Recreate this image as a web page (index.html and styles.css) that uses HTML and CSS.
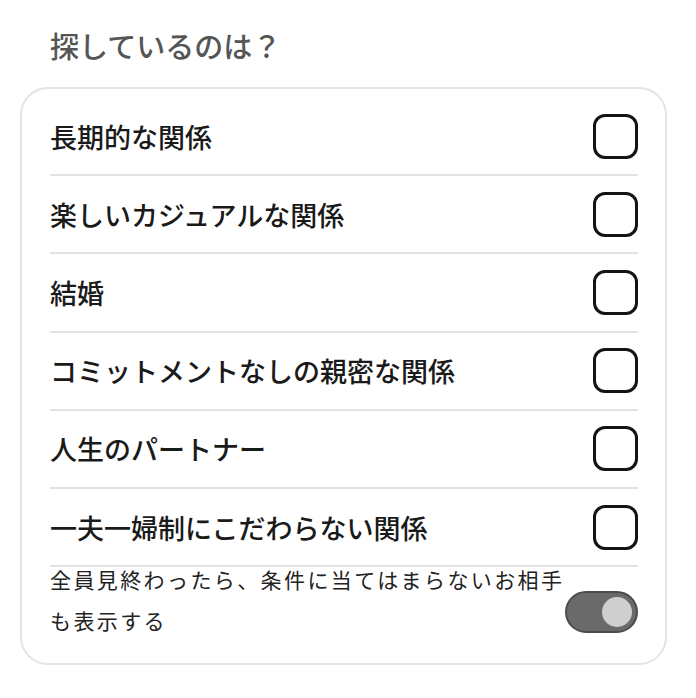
FILE: index.html
```html
<!DOCTYPE html>
<html lang="ja">
<head>
<meta charset="utf-8">
<link rel="stylesheet" href="styles.css">
</head>
<body>
<div class="page">
  <h2 class="title">探しているのは？</h2>
  <div class="card">
    <div class="row"><span class="label">長期的な関係</span><span class="check"></span></div>
    <div class="row"><span class="label">楽しいカジュアルな関係</span><span class="check"></span></div>
    <div class="row"><span class="label">結婚</span><span class="check"></span></div>
    <div class="row"><span class="label">コミットメントなしの親密な関係</span><span class="check"></span></div>
    <div class="row"><span class="label">人生のパートナー</span><span class="check"></span></div>
    <div class="row"><span class="label">一夫一婦制にこだわらない関係</span><span class="check"></span></div>
    <div class="toggle-row">
      <p class="toggle-text">全員見終わったら、条件に当てはまらないお相手も表示する</p>
      <span class="toggle"><span class="knob"></span></span>
    </div>
  </div>
</div>
</body>
</html>
```

FILE: styles.css
```css
* { box-sizing: border-box; }
body {
  margin: 0;
  background: #fff;
  font-family: "Noto Sans CJK JP", "Noto Sans", sans-serif;
  color: #1a1a1a;
}
.page {
  padding: 25px 0 0 20px;
  width: 667px;
}
.title {
  margin: 0 0 22px 30px;
  font-size: 29px;
  line-height: 40px;
  font-weight: 500;
  color: #555;
}
.card {
  border: 2px solid #e4e4e4;
  border-radius: 28px;
  padding: 9px 27px 22px 28px;
}
.row {
  display: flex;
  align-items: center;
  justify-content: space-between;
  height: 78.2px;
  border-bottom: 2px solid #e2e2e2;
}
.label {
  font-size: 27px;
  font-weight: 500;
  color: #1a1a1a;
}
.check {
  width: 45px;
  height: 45px;
  border: 3px solid #141414;
  border-radius: 12px;
}
.toggle-row {
  display: flex;
  align-items: flex-end;
  justify-content: space-between;
}
.toggle-text {
  margin: -8px 0 0 0;
  flex: 1;
  font-size: 21px;
  letter-spacing: 2.4px;
  line-height: 41px;
  color: #222;
}
.toggle {
  flex: none;
  width: 73px;
  height: 42px;
  margin-bottom: 8px;
  border-radius: 21px;
  background: #6a6a6a;
  border: 2px solid #4c4c4c;
  display: flex;
  align-items: center;
  justify-content: flex-end;
  padding-right: 4px;
}
.knob {
  width: 30px;
  height: 30px;
  border-radius: 50%;
  background: #cfcfcf;
}
```
